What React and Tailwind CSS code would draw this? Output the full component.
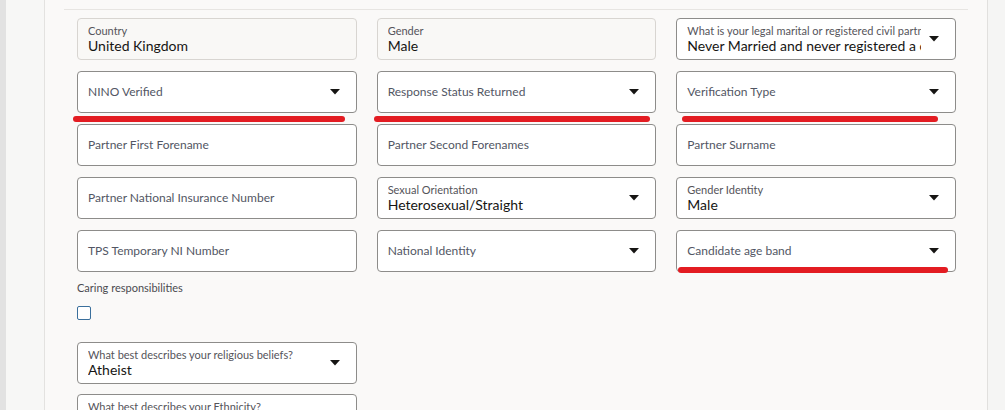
import React from 'react';

const Caret = () => (
  <svg width="10" height="6" viewBox="0 0 10 6" className="shrink-0">
    <path d="M0 0 H10 L5 5.5 Z" fill="#161513" />
  </svg>
);

const Field = ({ label, value, placeholder, select, readOnly }) => (
  <div
    className={`h-[42px] rounded-[4px] border flex items-center pl-[10px] pr-[16px] gap-2 overflow-hidden ${
      readOnly ? 'bg-[#f9f8f6] border-[#d8d5d1]' : 'bg-white border-[#8d8c8a]'
    }`}
  >
    <div className="flex-1 min-w-0">
      {label ? (
        <>
          <div className="text-[11px] leading-[13px] text-[#55545a] whitespace-nowrap overflow-hidden">{label}</div>
          <div className="text-[14px] leading-[17px] h-[17px] text-[#161513] whitespace-nowrap overflow-hidden">{value}</div>
        </>
      ) : (
        <div className="text-[12px] leading-[16px] text-[#525664] whitespace-nowrap">{placeholder}</div>
      )}
    </div>
    {select && <Caret />}
  </div>
);

const Mark = ({ className }) => (
  <div className={`absolute h-[6px] rounded-full bg-[#e31c22] ${className}`} />
);

export default function App() {
  return (
    <div
      className="w-[1005px] h-[410px] overflow-hidden flex bg-[#f6f6f5]"
      style={{ fontFamily: 'Lato, "Noto Sans", sans-serif' }}
    >
      <div className="w-[6px] bg-[#e2e2e2] shrink-0" />
      <div className="w-[39px] bg-[#f7f7f6] shrink-0 border-r border-[#e3e2e0]" />
      <div className="w-[943px] shrink-0 bg-[#faf9f8] border-r border-[#e1e0de] relative pt-[9px] px-[19px]">
        <div className="border-t border-[#e7e5e2] pt-[8px] pl-[13px] pr-[12px]">
          <div className="grid grid-cols-3 gap-x-[20px] gap-y-[11px]">
            <Field readOnly label="Country" value="United Kingdom" />
            <Field readOnly label="Gender" value="Male" />
            <Field
              select
              label="What is your legal marital or registered civil partnership status?"
              value="Never Married and never registered a civil partnership"
            />
            <Field select placeholder="NINO Verified" />
            <Field select placeholder="Response Status Returned" />
            <Field select placeholder="Verification Type" />
            <Field placeholder="Partner First Forename" />
            <Field placeholder="Partner Second Forenames" />
            <Field placeholder="Partner Surname" />
            <Field placeholder="Partner National Insurance Number" />
            <Field select label="Sexual Orientation" value="Heterosexual/Straight" />
            <Field select label="Gender Identity" value="Male" />
            <Field placeholder="TPS Temporary NI Number" />
            <Field select placeholder="National Identity" />
            <Field select placeholder="Candidate age band" />
          </div>

          <div className="mt-[9px] text-[11px] leading-[14px] text-[#4a4a50]">Caring responsibilities</div>
          <div className="mt-[11px] w-[14px] h-[14px] rounded-[2px] border-[1.5px] border-[#3a6f9c] bg-white" />

          <div className="mt-[22px] w-[280px] flex flex-col gap-[10px]">
            <Field select label="What best describes your religious beliefs?" value="Atheist" />
            <Field select label="What best describes your Ethnicity?" value="" />
          </div>
        </div>

        <Mark className="left-[28px] top-[116px] w-[272px]" />
        <Mark className="left-[329px] top-[116px] w-[276px]" />
        <Mark className="left-[637px] top-[116px] w-[256px]" />
        <Mark className="left-[633px] top-[267px] w-[270px]" />
      </div>
      <div className="flex-1 bg-[#f5f5f4]" />
    </div>
  );
}
